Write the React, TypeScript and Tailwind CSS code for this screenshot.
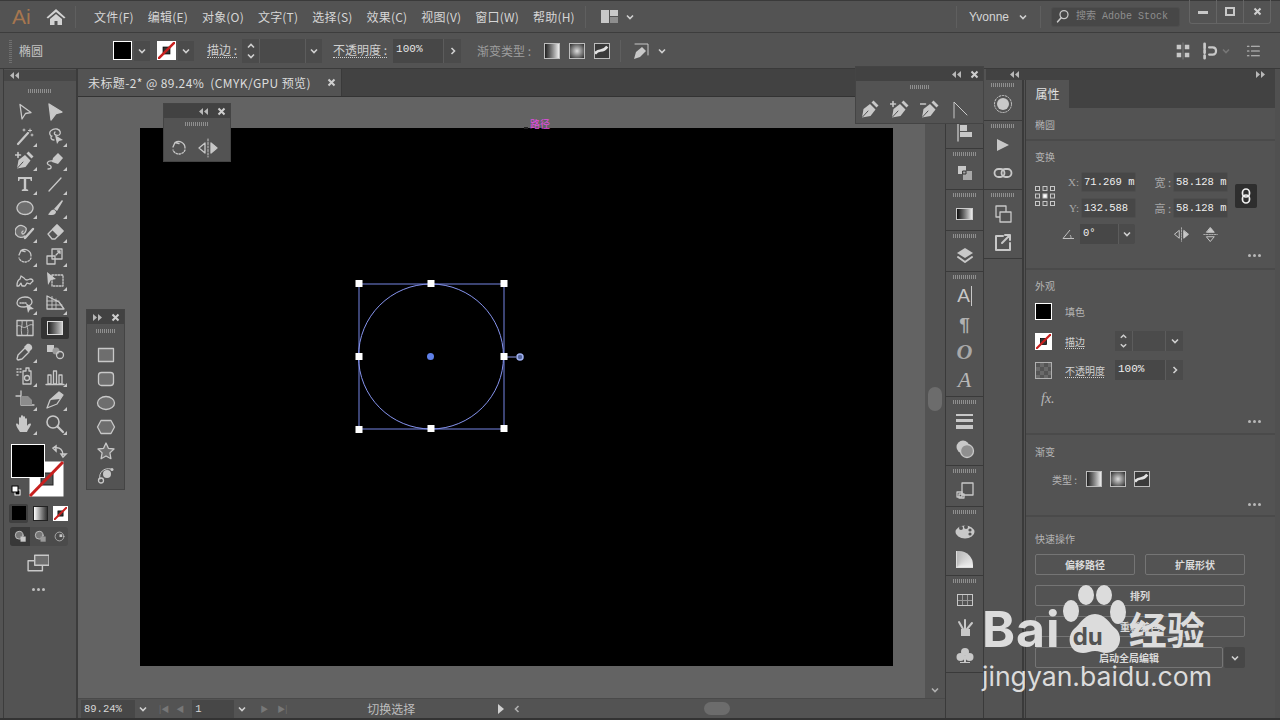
import type { ReactNode } from 'react'

const C = '#c8c8c8'

function Ic({ s = 20, children }: { s?: number; children: ReactNode }) {
  return (
    <svg width={s} height={s} viewBox="0 0 20 20" fill="none" stroke={C} strokeWidth="1.3" strokeLinejoin="round" strokeLinecap="round">
      {children}
    </svg>
  )
}

function Grip({ w = 'w-[24px]' }: { w?: string }) {
  return <div className={`${w} h-[4px] shrink-0 bg-[repeating-linear-gradient(90deg,#8f8f8f_0_1px,transparent_1px_2px)]`} />
}

function Chevron({ c = '#d0d0d0', s = 10 }: { c?: string; s?: number }) {
  return (
    <svg width={s} height={s} viewBox="0 0 10 10" fill="none" stroke={c} strokeWidth="1.6">
      <path d="M2 3.5 5 6.5 8 3.5" />
    </svg>
  )
}

function Arrows({ dir = 'left' }: { dir?: 'left' | 'right' }) {
  return (
    <svg width="9" height="7" viewBox="0 0 9 7" fill="#b8b8b8">
      {dir === 'left' ? <path d="M4 0v7L0 3.5zM9 0v7L5 3.5z" /> : <path d="M0 0v7l4-3.5zM5 0v7l4-3.5z" />}
    </svg>
  )
}

function Close() {
  return (
    <svg width="9" height="9" viewBox="0 0 9 9" stroke="#cfcfcf" strokeWidth="2">
      <path d="M1.5 1.5l6 6M7.5 1.5l-6 6" />
    </svg>
  )
}

function Pen({ extra }: { extra?: ReactNode }) {
  return (
    <Ic>
      <path d="M2 18.500 3.500 10 10 5 15.500 10.500 10.500 17Z" fill={C} stroke="none" />
      <path d="M11.500 3.500 13.500 1.500 18.500 6.500 16.500 8.500Z" fill={C} stroke="none" />
      <path d="M2.500 18 8 12" stroke="#535353" strokeWidth="1" />
      {extra}
    </Ic>
  )
}

const NoneSwatch = ({ size }: { size: string }) => (
  <div className={`${size} relative border border-white bg-white overflow-hidden`}>
    <svg className="absolute inset-0 w-full h-full" viewBox="0 0 20 20">
      <rect x="6" y="6" width="8" height="8" fill="#333" stroke="#000" />
      <path d="M0 20 20 0" stroke="#c8201f" strokeWidth="3" />
    </svg>
  </div>
)

const Sw = ({ size, children }: { size: string; children?: ReactNode }) => (
  <div className={`${size} border border-white bg-black`}>{children}</div>
)

const LinearG = 'w-[16px] h-[16px] border border-[#bdbdbd] bg-linear-to-r from-[#222222] to-[#eeeeee]'
const RadialG = 'w-[16px] h-[16px] border border-[#bdbdbd] bg-[radial-gradient(circle,#dddddd,#2a2a2a)]'

function FreeG() {
  return (
    <div className="w-[16px] h-[16px] border border-[#bdbdbd] bg-[#3a3a3a] overflow-hidden">
      <svg viewBox="0 0 16 16" width="14" height="14">
        <path d="M0 11C5 4 8 11 14 3" stroke="#e2e2e2" strokeWidth="3" fill="none" />
      </svg>
    </div>
  )
}

const tools: ReactNode[] = [
  <Ic><path d="M5 2.500 16 10.500 10.500 11.500 7 17Z" /></Ic>,
  <Ic><path d="M4 2 17 10 11 11.500 6 18Z" fill={C} /></Ic>,
  <Ic><path d="M3 18 13 7" strokeWidth="2.200" /><path d="M15 3v3M13.500 4.500h3M17 8v2M16 9h2M9 3v2M8 4h2" strokeWidth="1" /></Ic>,
  <Ic><path d="M6 10C2 6 8 2 12 3c4 1 4 5 2 6-3 1-6-1-4-3M9 14c-3 0-4-3-2-4" /><path d="M10 9l8 5-4 1-2 3Z" fill={C} stroke="none" /></Ic>,
  <Pen extra={<path d="M0.500 5h5M3 2.500v5" strokeWidth="1.600" />} />,
  <Ic><path d="M8 8 13 3 18 8 13 14 7 12Z" fill={C} stroke="none" /><path d="M8 11C2 10 1 14 4 15s3 4-1 4" /></Ic>,
  <svg width="20" height="20" viewBox="0 0 20 20" fill={C}><path d="M3 3h14v4h-1.200l-.6-2H11.200v10l2 .8V17H6.800v-1.200l2-.8V5H4.800l-.6 2H3Z" /></svg>,
  <Ic><path d="M4 17 16 4" /></Ic>,
  <Ic><ellipse cx="10" cy="10" rx="8" ry="6.500" fill="#6e6e6e" strokeDasharray="2 .4" /></Ic>,
  <Ic><path d="M9 11 17 2l1 1-6 10Z" fill={C} stroke="none" /><path d="M9 11.500c-3 0-4 3-6 5 3 1 8 1 8-3Z" fill={C} stroke="none" /></Ic>,
  <Ic><path d="M10 14a6 6 0 1 1 1-8c1 3-2 6-3 6s-2-2 0-3" fill="#6e6e6e" /><path d="M10 16 18 7" strokeWidth="2.400" /></Ic>,
  <Ic><path d="M3 12 12 3l6 6-8 8H7Z" /><path d="M12 3l6 6-4.500 4.500-6-6Z" fill={C} /></Ic>,
  <Ic><path d="M6 4.500A6.500 6.500 0 0 1 16 10M4 9l2-4.500 4 1" /><path d="M16 12a6.500 6.500 0 0 1-12 0" strokeDasharray="1.500 1.500" /></Ic>,
  <Ic><rect x="2" y="10" width="8" height="8" /><rect x="7" y="3" width="10" height="10" /><path d="M11 9l4-4M12.500 5H15v2.500" /></Ic>,
  <Ic><path d="M2 16c0-4 1-6 3-7l1-3 3 2c2 3 4 2 6 1 2 0 3 1 3 2l-3 3-3-1-2 3H7l-1-3-2 3Z" strokeDasharray="3 .6" /></Ic>,
  <Ic><path d="M2 2 11 9 6 10 3 15Z" fill={C} stroke="none" /><rect x="7" y="5" width="11" height="11" strokeDasharray="1.600 1.400" /></Ic>,
  <Ic><path d="M2 9c0-4 4-6 8-6s7 2 7 5-4 5-8 5-7-1-7-4Z" /><path d="M5 9h7" strokeDasharray="1.200 1.200" /><path d="M11 9 19 15l-4 .5-2 3.500Z" fill={C} stroke="none" /></Ic>,
  <Ic><path d="M2 2 14 8l5 7H2Z" /><path d="M2 7h12M2 11h15M7 2.500V15M11 5v10" strokeWidth=".9" /></Ic>,
  <Ic><rect x="2" y="2.500" width="16" height="15" /><path d="M2 8c4-2 5 3 9 1s4-3 7-2M7 2.500c1 5-2 7 0 15M12 2.500c-2 5 3 9 0 15" strokeWidth=".9" /></Ic>,
  <div className="w-[28px] h-[22px] bg-[#333333] rounded-[2px] flex items-center justify-center">
    <div className="w-[16px] h-[14px] border border-[#dddddd] bg-linear-to-r from-[#222222] to-[#cccccc]" />
  </div>,
  <Ic><path d="M3 18 2 17l1-4 7-7 4 4-7 7Z" /><path d="M9 5l3-3c3-1 6 2 5 5l-3 3Z" fill={C} stroke="none" /></Ic>,
  <Ic><rect x="2" y="3" width="7" height="7" fill={C} stroke="none" /><circle cx="11" cy="9" r="3.500" fill="#9a9a9a" stroke="none" /><circle cx="15" cy="13" r="3.500" /></Ic>,
  <Ic><path d="M2 3h1M5 3h1M2 6h1M5 6h1M2 9h1" strokeWidth="1.500" /><path d="M11 2h3v3h2v13H8V5h3Z" /><circle cx="12" cy="12" r="2.500" /></Ic>,
  <Ic><path d="M3 18V9h3v9ZM8.500 18V5h3v13ZM14 18V9h3v9Z" /><path d="M1 18.500h18" /></Ic>,
  <Ic><path d="M6 1v14h13M1 6h5" /><path d="M6 6h7l4 4v5H6Z" fill="#8c8c8c" stroke="none" /></Ic>,
  <Ic><path d="M2 18 5 10 14 2l4 3-6 9Z" /><path d="M5 10 14 2l4 3-3 4Z" fill={C} stroke="none" /></Ic>,
  <svg width="20" height="20" viewBox="0 0 20 20" fill={C}><path d="M5 18c-2-3-4-6-4-8 1-1 2 0 3 1V4c0-1 2-1 2 0V2c0-1 2-1 2 0v1c0-1 2-1 2 0v2c0-1 2-1 2 0v7c1-2 3-3 4-2 0 2-3 5-4 8Z" /></svg>,
  <Ic><circle cx="8" cy="8" r="6" strokeWidth="1.600" /><path d="M12.500 12.500 18 18" strokeWidth="2.200" /></Ic>,
]

function ToolButton({ item, corner }: { item: ReactNode; corner: boolean }) {
  return (
    <div className="relative h-[24px] flex items-center justify-center">
      {item}
      {corner && <div className="absolute right-[3px] bottom-[1px] w-0 h-0 border-l-[4px] border-l-transparent border-b-[4px] border-b-[#c8c8c8]" />}
    </div>
  )
}

function LeftToolbar() {
  const noCorner = [0, 1, 18, 19, 21]
  return (
    <aside className="w-[78px] shrink-0 flex bg-[#535353] border-r-2 border-[#3c3c3c]">
      <div className="w-[4px] h-full border-r border-[#3c3c3c]" />
      <div className="flex-1 flex flex-col">
        <div className="h-[11px] mt-[1px] bg-[#474747] flex items-center pl-[6px]">
          <Arrows />
        </div>
        <div className="h-[19px] flex items-center justify-center">
          <Grip />
        </div>
        <div className="grid grid-cols-2 w-[60px] ml-[6px]">
          {tools.map((t, i) => (
            <ToolButton key={i} item={t} corner={!noCorner.includes(i)} />
          ))}
        </div>
        <div className="mt-[8px] ml-[7px]">
          <svg width="60" height="54" viewBox="0 0 60 54">
            <rect x="18.500" y="17.500" width="34" height="35" fill="#fff" />
            <rect x="30" y="29" width="12" height="12" fill="#555" stroke="#222" />
            <path d="M19 52 52 18" stroke="#c8201f" strokeWidth="3" />
            <rect x="0.500" y="0.500" width="33" height="33" fill="#000" stroke="#fff" />
            <path d="M44 4c5-1 8 2 8 7M42 4l3-2v5ZM52 13l-2-3h5Z" stroke={C} strokeWidth="1.500" fill="none" />
            <rect x="4" y="46" width="5" height="5" fill="#000" stroke="#fff" />
            <rect x="1" y="42" width="6" height="6" fill="#fff" stroke="#000" />
          </svg>
        </div>
        <div className="mt-[6px] ml-[3px] w-[63px] flex gap-[5px] items-center justify-center h-[18px]">
          <div className="w-[19px] h-[19px] rounded-[2px] bg-[#3f3f3f] flex items-center justify-center">
            <div className="w-[14px] h-[14px] bg-black" />
          </div>
          <div className="w-[15px] h-[15px] border border-[#222222] bg-linear-to-r from-white to-[#333333]" />
          <NoneSwatch size="w-[15px] h-[15px]" />
        </div>
        <div className="mt-[5px] ml-[6px] w-[58px] h-[19px] rounded-[3px] bg-[#4b4b4b] flex">
          <div className="w-[20px] bg-[#383838] rounded-l-[3px] flex items-center justify-center">
            <Ic s={13}><circle cx="8" cy="8" r="6" fill="#777" /><rect x="10" y="10" width="8" height="8" fill={C} stroke="none" /></Ic>
          </div>
          <div className="w-[20px] flex items-center justify-center">
            <Ic s={13}><circle cx="8" cy="8" r="6" fill="#777" /><rect x="10" y="10" width="8" height="8" fill="#999" stroke="none" /></Ic>
          </div>
          <div className="w-[18px] flex items-center justify-center">
            <Ic s={11}><circle cx="10" cy="10" r="8" /><rect x="10" y="6" width="5" height="5" fill={C} stroke="none" /></Ic>
          </div>
        </div>
        <div className="mt-[6px] flex justify-center pr-[4px]">
          <Ic s={22}><rect x="1" y="8" width="13" height="9" /><rect x="7" y="3" width="13" height="9" fill="#6e6e6e" /></Ic>
        </div>
        <div className="mt-[14px] flex justify-center gap-[2px] pr-[4px]">
          <div className="w-[3px] h-[3px] rounded-full bg-[#c0c0c0]" />
          <div className="w-[3px] h-[3px] rounded-full bg-[#c0c0c0]" />
          <div className="w-[3px] h-[3px] rounded-full bg-[#c0c0c0]" />
        </div>
      </div>
    </aside>
  )
}

function MenuBar() {
  const menus = ['文件(F)', '编辑(E)', '对象(O)', '文字(T)', '选择(S)', '效果(C)', '视图(V)', '窗口(W)', '帮助(H)']
  return (
    <header className="h-[33px] shrink-0 flex items-center bg-[#535353] border-b border-[#3d3d3d] border-t border-t-[#3a3a3a]">
      <span className="ml-[12px] w-[22px] font-['Liberation_Sans',sans-serif] text-[21px] leading-none text-[#a6764f]">Ai</span>
      <div className="ml-[12px]">
        <svg width="20" height="18" viewBox="0 0 20 18" fill="#d2d2d2">
          <path d="M10 1 0.500 9.500l1.500 1L10 4l8 6.500 1.500-1ZM4 11v6h4.500v-4h3v4H16v-6l-6-5Z" />
        </svg>
      </div>
      <div className="w-px h-[22px] ml-[9px] bg-[#5f5f5f]" />
      <nav className="ml-[18px] flex gap-[14px] text-[12px] tracking-[0.2px] text-[#d6d6d6]">
        {menus.map((m) => (
          <span key={m}>{m}</span>
        ))}
      </nav>
      <div className="w-px h-[22px] ml-[10px] bg-[#5f5f5f]" />
      <div className="ml-[15px] flex items-center gap-[7px]">
        <div className="grid grid-cols-[8px_8px] grid-rows-[6px_6px] gap-px">
          <div className="row-span-2 bg-[#c8c8c8]" />
          <div className="bg-[#c8c8c8]" />
          <div className="bg-[#8e8e8e]" />
        </div>
        <Chevron />
      </div>
      <div className="ml-auto w-px h-[22px] bg-[#5f5f5f]" />
      <span className="ml-[12px] text-[12px] font-['Liberation_Sans',sans-serif] text-[#d6d6d6]">Yvonne</span>
      <div className="ml-[9px]">
        <Chevron />
      </div>
      <div className="w-px h-[22px] ml-[12px] bg-[#5f5f5f]" />
      <div className="ml-[10px] w-[129px] h-[20px] rounded-[3px] bg-[#474747] border border-[#4e4e4e] flex items-center pl-[4px] gap-[4px]">
        <Ic s={16}><circle cx="10" cy="7" r="5" strokeWidth="1.600" /><path d="M6.500 11 2 16" strokeWidth="2" /></Ic>
        <span className="font-['Liberation_Mono','Noto_Sans_CJK_SC',monospace] text-[10px] text-[#8f8f8f] whitespace-nowrap">搜索 Adobe Stock</span>
      </div>
      <div className="ml-[9px] mr-[9px] mb-[10px] w-[82px] h-[24px] border border-t-0 border-[#656565] rounded-b-[3px] flex items-center">
        <div className="flex-1 flex justify-center border-r border-[#656565] h-full items-center"><div className="w-[10px] h-[3px] mt-[3px] bg-[#c8c8c8]" /></div>
        <div className="flex-1 flex justify-center border-r border-[#656565] h-full items-center"><div className="w-[10px] h-[9px] border-2 border-[#c8c8c8]" /></div>
        <div className="flex-1 flex justify-center h-full items-center"><Close /></div>
      </div>
    </header>
  )
}

function ControlBar() {
  return (
    <div className="h-[36px] shrink-0 flex items-center bg-[#535353] border-b border-[#3a3a3a] text-[12px] text-[#d0d0d0]">
      <div className="ml-[9px] w-[3px] h-[24px] bg-[repeating-linear-gradient(0deg,#707070_0_1px,transparent_1px_2px)]" />
      <span className="ml-[7px] text-[#c4c4c4]">椭圆</span>
      <div className="ml-[70px]"><Sw size="w-[19px] h-[19px]" /></div>
      <div className="ml-[2px] w-[16px] h-[20px] bg-[#4b4b4b] flex items-center justify-center"><Chevron /></div>
      <div className="ml-[7px]"><NoneSwatch size="w-[19px] h-[19px]" /></div>
      <div className="ml-[2px] w-[16px] h-[20px] bg-[#4b4b4b] flex items-center justify-center"><Chevron /></div>
      <span className="ml-[13px] border-b border-dotted border-[#d0d0d0] leading-[14px]">描边 :</span>
      <div className="ml-[5px] w-[80px] h-[24px] flex items-stretch bg-[#4b4b4b]">
        <div className="w-[18px] flex flex-col items-center justify-center border-r border-[#5c5c5c]">
          <div className="rotate-180"><Chevron /></div>
          <Chevron />
        </div>
        <div className="flex-1 bg-[#4a4a4a]" />
        <div className="w-[17px] flex items-center justify-center border-l border-[#5c5c5c]"><Chevron /></div>
      </div>
      <span className="ml-[11px] border-b border-dotted border-[#d0d0d0] leading-[14px] whitespace-nowrap">不透明度 :</span>
      <div className="ml-[6px] w-[68px] h-[24px] flex items-stretch bg-[#4b4b4b]">
        <span className="flex-1 bg-[#474747] pl-[3px] font-['Liberation_Mono',monospace] text-[11px] text-[#e6e6e6] leading-[20px]">100%</span>
        <div className="w-[18px] flex items-center justify-center border-l border-[#5c5c5c]"><div className="-rotate-90"><Chevron /></div></div>
      </div>
      <span className="ml-[16px] text-[#9e9e9e] whitespace-nowrap">渐变类型 :</span>
      <div className="ml-[13px] flex gap-[9px]">
        <div className={LinearG} />
        <div className={RadialG} />
        <FreeG />
      </div>
      <div className="w-px h-[22px] ml-[10px] bg-[#5f5f5f]" />
      <div className="ml-[10px]">
        <Ic><path d="M3 18 5 11 11 6 15 10 9 16Z" fill={C} stroke="none" /><path d="M4 3h13v11" strokeWidth="1" /></Ic>
      </div>
      <div className="ml-[6px]"><Chevron /></div>
      <div className="ml-auto flex items-center pr-[19px]">
        <Ic s={18}><path d="M3 3h5v5H3ZM12 3h5v5h-5ZM3 12h5v5H3ZM12 12h5v5h-5Z" fill={C} stroke="none" /><path d="M10 1v18" stroke="#777" /></Ic>
        <div className="ml-[9px]">
          <Ic s={18}><path d="M4 2v5M4 9v3M4 15v3" strokeWidth="3" /><path d="M9 6h4c5 0 5 8 0 8H9" strokeWidth="2.400" /></Ic>
        </div>
        <div className="ml-[2px]"><Chevron c="#777777" /></div>
        <div className="ml-[14px]">
          <Ic s={16}><path d="M3 4h2M8 4h10M3 10h2M8 10h10M3 16h2M8 16h10" /></Ic>
        </div>
      </div>
    </div>
  )
}

function Selection() {
  const handles: [number, number][] = [
    [359, 283], [431, 283], [504, 283], [359, 356], [504, 356], [359, 429], [431, 428], [504, 428],
  ]
  return (
    <svg className="absolute left-[-140px] top-[-128px]" width="893" height="666" viewBox="0 0 893 666" fill="none">
      <rect x="359" y="284" width="145" height="145" stroke="#7685e4" />
      <circle cx="431" cy="356.500" r="72.500" stroke="#8694ee" />
      <path d="M504 357h12" stroke="#8e9bec" />
      <circle cx="520" cy="357" r="3" stroke="#9fb0f0" strokeWidth="1.500" fill="#54659c" />
      <circle cx="430.500" cy="356.500" r="3.500" fill="#5f80e8" />
      {handles.map(([x, y]) => (
        <rect key={`${x}-${y}`} x={x - 3.5} y={y - 3} width="7" height="7" fill="#fff" />
      ))}
    </svg>
  )
}

function CanvasArea() {
  return (
    <div className="w-[867px] shrink-0 flex flex-col">
      <div className="h-[28px] shrink-0 flex bg-[#424242] border-b border-[#333333]">
        <div className="w-[264px] h-full bg-[#535353] flex items-center pl-[10px] text-[12px] tracking-[0.4px] text-[#dcdcdc] border-r border-[#3a3a3a]">
          <span className="whitespace-pre">未标题-2* @ 89.24%  (CMYK/GPU 预览)</span>
          <div className="ml-auto mr-[5px]"><Close /></div>
        </div>
      </div>
      <div className="flex-1 min-h-0 flex">
        <main className="flex-1 bg-[#636363] pl-[62px] pt-[31px] relative overflow-hidden">
          <div className="relative w-[753px] h-[538px] bg-black">
            <Selection />
          </div>
          <span className="absolute left-[452px] top-[20px] text-[10px] leading-[14px] text-[#e14ce0]">路径</span>
          <div className="absolute left-[446px] top-[30px] w-[4px] h-[2px] bg-[#222222]" />
        </main>
        <div className="w-[20px] shrink-0 bg-[#535353] relative flex flex-col items-center justify-end pb-[3px]">
          <div className="absolute top-[290px] left-[3px] w-[14px] h-[24px] rounded-[7px] bg-[#6c6c6c]" />
          <Chevron c="#b0b0b0" />
        </div>
      </div>
      <footer className="h-[20px] shrink-0 bg-[#535353] border-t border-[#4a4a4a] flex items-center text-[11px] text-[#d8d8d8]">
        <span className="ml-[3px] w-[54px] h-[18px] bg-[#474747] pl-[3px] font-['Liberation_Mono',monospace] text-[10.5px] leading-[18px] shrink-0">89.24%</span>
        <div className="w-[16px] flex justify-center shrink-0"><Chevron /></div>
        <div className="ml-[8px] flex gap-[7px] items-center text-[#777777] text-[8px] leading-none shrink-0">
          <span>|◀</span><span>◀</span>
        </div>
        <span className="ml-[8px] w-[42px] h-[18px] bg-[#474747] pl-[3px] font-['Liberation_Mono',monospace] text-[10.5px] leading-[18px] shrink-0">1</span>
        <div className="w-[16px] flex justify-center shrink-0"><Chevron /></div>
        <div className="ml-[10px] flex gap-[9px] items-center text-[#777777] text-[8px] leading-none shrink-0">
          <span>▶</span><span>▶|</span>
        </div>
        <span className="ml-[80px] text-[#bdbdbd] text-[12px] whitespace-nowrap shrink-0">切换选择</span>
        <div className="ml-[83px] w-0 h-0 border-y-[5px] border-y-transparent border-l-[6px] border-l-[#d0d0d0] shrink-0" />
        <div className="ml-[8px] rotate-90 shrink-0"><Chevron c="#b0b0b0" /></div>
        <div className="ml-[182px] w-[26px] h-[13px] rounded-[7px] bg-[#6c6c6c] shrink-0" />
      </footer>
    </div>
  )
}

function DockGroup({ items }: { items: ReactNode[] }) {
  return (
    <div className="flex flex-col items-center pt-[3px] pb-[2px] border-b border-[#3a3a3a] shrink-0">
      <Grip />
      <div className="mt-[3px] flex flex-col">
        {items.map((it, i) => (
          <div key={i} className="h-[28px] w-[24px] flex items-center justify-center">{it}</div>
        ))}
      </div>
    </div>
  )
}

function Dock() {
  const col1 = [
    [
      <Ic><circle cx="10" cy="10" r="6" fill={C} stroke="none" /></Ic>,
      <Ic><path d="M3 1v18" /><path d="M5 3h7v6H5ZM5 10h12v5H5Z" fill={C} stroke="none" /></Ic>,
    ],
    [<Ic><path d="M3 3h8v8H3Z" fill={C} stroke="none" /><path d="M8 8h9v9H8Z" fill="#a8a8a8" stroke="none" /><path d="M8 8h3v3H8Z" stroke="#333" fill="none" strokeWidth="1" /></Ic>],
    [<div className="w-[17px] h-[12px] border border-[#cccccc] bg-linear-to-r from-[#111111] to-[#eeeeee]" />],
    [<Ic><path d="M10 3l8 5-8 5-8-5Z" fill={C} stroke="none" /><path d="M3 12l7 5 7-5" strokeWidth="2" /></Ic>],
    [
      <span className="font-['Liberation_Sans',sans-serif] text-[19px] text-[#c8c8c8] border-r border-[#c8c8c8] pr-[1px] leading-[20px]">A</span>,
      <span className="font-['Liberation_Sans',sans-serif] text-[19px] font-bold text-[#b0b0b0] leading-none">¶</span>,
      <span className="font-['Liberation_Serif',serif] italic font-bold text-[22px] text-[#a8a8a8] leading-none">O</span>,
      <span className="font-['Liberation_Serif',serif] italic text-[22px] text-[#b8b8b8] leading-none">A</span>,
    ],
    [
      <div className="flex flex-col gap-[3px]"><div className="w-[17px] h-[2px] bg-[#c8c8c8]" /><div className="w-[17px] h-[3px] bg-[#c8c8c8]" /><div className="w-[17px] h-[4px] bg-[#c8c8c8]" /></div>,
      <Ic><circle cx="8" cy="8" r="6.500" fill={C} stroke="none" /><circle cx="12" cy="12" r="6.500" fill="#8f8f8f" /></Ic>,
    ],
    [<Ic><rect x="7" y="3" width="11" height="12" /><rect x="2" y="12" width="5" height="5" /><rect x="4" y="14" width="5" height="4" /></Ic>],
    [
      <svg width="20" height="16" viewBox="0 0 20 16"><ellipse cx="10" cy="9" rx="9.500" ry="6.500" fill={C} /><circle cx="6" cy="5" r="2" fill="#535353" /><circle cx="11" cy="4" r="2" fill="#535353" /><circle cx="15" cy="7" r="1.600" fill="#535353" /><circle cx="15" cy="11" r="1.600" fill="#535353" /></svg>,
      <div className="w-[17px] h-[17px] bg-[conic-gradient(from_90deg_at_0%_100%,#111111,#eeeeee)] rounded-tr-[14px] border-l border-b border-[#dddddd]" />,
    ],
    [
      <div className="grid grid-cols-3 gap-px w-[16px] h-[12px] border border-[#c8c8c8] bg-[#999999]"><div className="bg-[#535353]" /><div className="bg-[#535353]" /><div className="bg-[#535353]" /><div className="bg-[#535353]" /><div className="bg-[#535353]" /><div className="bg-[#535353]" /></div>,
      <Ic><path d="M6 11h9v7H6Z" fill={C} stroke="none" /><path d="M8 11 4 4M10 11V2M12 11l5-6" strokeWidth="2" /></Ic>,
      <svg width="18" height="18" viewBox="0 0 18 18" fill={C}><circle cx="9" cy="5" r="4" /><circle cx="4.500" cy="10" r="4" /><circle cx="13.500" cy="10" r="4" /><path d="M8 9h2v6h4v1H4v-1h4Z" /></svg>,
    ],
  ]
  const col2 = [
    [<Ic><circle cx="10" cy="10" r="6" fill={C} stroke="none" /><circle cx="10" cy="10" r="8.500" strokeDasharray="1.500 1.500" strokeWidth="1" /></Ic>],
    [
      <svg width="14" height="14" viewBox="0 0 14 14" fill={C}><path d="M1 1l12 6-12 6Z" /></svg>,
      <Ic><rect x="1.500" y="6" width="10" height="8" rx="4" strokeWidth="1.800" /><rect x="8.500" y="6" width="10" height="8" rx="4" strokeWidth="1.800" /></Ic>,
    ],
    [
      <Ic><rect x="3" y="2" width="10" height="11" /><rect x="7" y="8" width="11" height="10" fill="#535353" /></Ic>,
      <Ic><path d="M10 4H3v14h14v-7" strokeWidth="2" /><path d="M9 11l8-8M12 3h5v5" strokeWidth="2" /></Ic>,
    ],
  ]
  return (
    <div className="w-[80px] shrink-0 flex bg-[#535353]">
      <div className="w-[39px] flex flex-col border-l border-r border-[#3a3a3a] h-full pt-[11px]">
        {col1.map((g, i) => <DockGroup key={i} items={g} />)}
      </div>
      <div className="w-[40px] flex flex-col border-r-2 border-[#3a3a3a] h-full pt-[11px]">
        {col2.map((g, i) => <DockGroup key={i} items={g} />)}
      </div>
    </div>
  )
}

const Mono = "font-['Liberation_Mono',monospace] text-[10.5px] text-[#efefef] whitespace-nowrap overflow-hidden"

function Field({ label, value, wide }: { label: string; value: string; wide?: boolean }) {
  return (
    <div className="flex items-center h-[20px]">
      <span className={`${wide ? 'w-[29px]' : "w-[21px] font-['Liberation_Serif',serif]"} text-[11px] text-[#a8a8a8] text-right pr-[2px] whitespace-nowrap`}>{label}</span>
      <div className={`${Mono} w-[55px] h-[20px] leading-[18px] bg-[#474747] rounded-[2px] border border-[#4e4e4e] pl-[2px]`}>{value}</div>
    </div>
  )
}

function Dots() {
  return (
    <div className="flex justify-end gap-[2px] -mr-[4px]">
      <div className="w-[3px] h-[3px] rounded-full bg-[#b8b8b8]" />
      <div className="w-[3px] h-[3px] rounded-full bg-[#b8b8b8]" />
      <div className="w-[3px] h-[3px] rounded-full bg-[#b8b8b8]" />
    </div>
  )
}

function Section({ title, className, children }: { title: string; className: string; children?: ReactNode }) {
  return (
    <section className={`${className} shrink-0 border-b-2 border-[#4a4a4a] pl-[9px] pr-[18px]`}>
      <div className="h-[18px] leading-[18px] mt-[7px] text-[10px] text-[#b4b4b4]">{title}</div>
      {children}
    </section>
  )
}

function QuickButton({ label, className = '' }: { label: string; className?: string }) {
  return (
    <div className={`${className} h-[21px] border border-[#757575] rounded-[2px] flex items-center justify-center text-[10px] font-bold text-[#dadada]`}>{label}</div>
  )
}

function Properties() {
  return (
    <div className="w-[255px] shrink-0 flex flex-col bg-[#535353] border-r-[5px] border-r-[#505050] border-l border-l-[#3a3a3a]">
      <div className="h-[11px] shrink-0 -ml-[40px] relative bg-[#424242] flex items-center justify-between pl-[24px] pr-[10px]">
        <Arrows />
        <Arrows dir="right" />
      </div>
      <div className="h-[28px] shrink-0 bg-[#424242] flex">
        <div className="w-[43px] bg-[#535353] flex items-center justify-center text-[12px] text-[#e2e2e2]">属性</div>
      </div>
      <section className="h-[33px] shrink-0 border-b-2 border-[#4a4a4a] pl-[9px] text-[10px] text-[#b4b4b4] leading-[33px]">椭圆</section>

      <Section title="变换" className="h-[129px]">
        <div className="flex mt-[6px]">
          <div className="w-[21px] mt-[14px]">
            <svg width="20" height="20" viewBox="0 0 20 20" fill="none" stroke="#c8c8c8">
              {[0.5, 8, 15.5].map((x) => [0.5, 8, 15.5].map((y) => (
                <rect key={`${x}${y}`} x={x} y={y} width="4" height="4" fill={x === 8 && y === 8 ? '#fff' : 'none'} />
              )))}
            </svg>
          </div>
          <div className="ml-[5px] flex flex-col gap-[6px]">
            <Field label="X:" value="71.269 m" />
            <Field label="Y:" value="132.588" />
            <div className="flex items-center h-[20px]">
              <span className="w-[20px] pl-[2px] text-[11px] text-[#c0c0c0]">
                <svg width="14" height="12" viewBox="0 0 14 12" fill="none" stroke="#c0c0c0"><path d="M1 10.500h11M1 10.500 8 2M8 7c1 1 1 2 1 3.500" /></svg>
              </span>
              <div className="w-[55px] h-[20px] flex bg-[#4b4b4b] rounded-[2px]">
                <span className={`${Mono} flex-1 bg-[#474747] leading-[18px] pl-[3px]`}>0°</span>
                <div className="w-[17px] flex items-center justify-center border-l border-[#5c5c5c]"><Chevron /></div>
              </div>
            </div>
          </div>
          <div className="ml-[8px] flex flex-col gap-[6px]">
            <Field wide label="宽 :" value="58.128 m" />
            <Field wide label="高 :" value="58.128 m" />
            <div className="flex items-center h-[20px] pl-[30px] gap-[14px]">
              <Ic s={15}><path d="M10 1v18" strokeDasharray="2 1.500" strokeWidth="1" /><path d="M7 5v10L1 10Z" /><path d="M13 5v10l6-5Z" fill={C} /></Ic>
              <Ic s={15}><path d="M1 10h18" strokeDasharray="2 1.500" strokeWidth="1" /><path d="M5 7h10L10 1Z" fill={C} /><path d="M5 13h10l-5 6Z" /></Ic>
            </div>
          </div>
          <div className="ml-[7px] mt-[12px] w-[23px] h-[24px] rounded-[2px] bg-[#2e2e2e] flex items-center justify-center">
            <svg width="10" height="16" viewBox="0 0 10 16" fill="none" stroke="#f0f0f0" strokeWidth="1.700">
              <rect x="1.500" y="1" width="7" height="8" rx="3.500" />
              <rect x="1.500" y="7" width="7" height="8" rx="3.500" />
            </svg>
          </div>
        </div>
        <div className="mt-[10px]"><Dots /></div>
      </Section>

      <Section title="外观" className="h-[165px]">
        <div className="mt-[7px] flex flex-col gap-[10px]">
          <div className="h-[19px] flex items-center">
            <Sw size="w-[17px] h-[17px]" />
            <span className="ml-[13px] text-[10px] text-[#b4b4b4]">填色</span>
          </div>
          <div className="h-[20px] flex items-center">
            <NoneSwatch size="w-[17px] h-[17px]" />
            <span className="ml-[13px] w-[50px] text-[10px] text-[#d0d0d0] underline decoration-dotted underline-offset-2">描边</span>
            <div className="w-[68px] h-[20px] bg-[#4b4b4b] flex">
              <div className="w-[18px] flex flex-col items-center justify-center border-r border-[#5c5c5c]">
                <div className="rotate-180"><Chevron s={9} /></div>
                <Chevron s={9} />
              </div>
              <div className="flex-1" />
              <div className="w-[18px] flex items-center justify-center border-l border-[#5c5c5c]"><Chevron /></div>
            </div>
          </div>
          <div className="h-[20px] flex items-center -mt-[1px]">
            <div className="w-[17px] h-[17px] border border-[#b0b0b0] bg-[repeating-conic-gradient(#6a6a6a_0_25%,#555555_0_50%)] bg-[length:8px_8px]" />
            <span className="ml-[13px] w-[50px] text-[10px] text-[#d0d0d0] underline decoration-dotted underline-offset-2 whitespace-nowrap">不透明度</span>
            <div className="w-[68px] h-[20px] bg-[#4b4b4b] flex">
              <span className="flex-1 bg-[#474747] pl-[3px] font-['Liberation_Mono',monospace] text-[11px] text-[#efefef] leading-[18px]">100%</span>
              <div className="w-[18px] flex items-center justify-center border-l border-[#5c5c5c]"><div className="-rotate-90"><Chevron /></div></div>
            </div>
          </div>
        </div>
        <div className="mt-[11px] pl-[6px] font-['Liberation_Serif',serif] italic text-[14px] leading-[16px] text-[#b8b8b8]">fx.</div>
        <div className="mt-[13px]"><Dots /></div>
      </Section>

      <Section title="渐变" className="h-[82px] pt-px">
        <div className="mt-[6px] flex items-center h-[24px] pl-[17px]">
          <span className="w-[34px] text-[10px] text-[#b4b4b4] whitespace-nowrap">类型 :</span>
          <div className="flex gap-[8px]">
            <div className={LinearG} />
            <div className={RadialG} />
            <FreeG />
          </div>
        </div>
        <div className="mt-[12px]"><Dots /></div>
      </Section>

      <section className="flex-1 pl-[9px] pr-[30px] relative">
        <div className="mt-[13px] h-[18px] leading-[18px] text-[10px] text-[#b4b4b4]">快速操作</div>
        <div className="mt-[6px] flex flex-col gap-[10px]">
          <div className="flex gap-[10px]">
            <QuickButton label="偏移路径" className="flex-1" />
            <QuickButton label="扩展形状" className="flex-1" />
          </div>
          <QuickButton label="排列" />
          <QuickButton label="重新着色" />
          <div className="flex gap-px">
            <QuickButton label="启动全局编辑" className="flex-1" />
            <div className="w-[21px] h-[21px] rounded-[2px] bg-[#474747] flex items-center justify-center"><Chevron /></div>
          </div>
        </div>
      </section>
    </div>
  )
}

function PanelHead({ h = 'h-[14px]', right }: { h?: string; right?: ReactNode }) {
  return <div className={`${h} shrink-0 bg-[#424242] flex items-center justify-end gap-[9px] pr-[4px]`}>{right}</div>
}

function RotatePanel() {
  return (
    <div className="absolute left-[163px] top-[103px] w-[68px] h-[59px] bg-[#535353] border border-[#444444]">
      <PanelHead right={<><Arrows /><Close /></>} />
      <div className="flex justify-center mt-[4px]"><Grip /></div>
      <div className="flex gap-[9px] pl-[5px] mt-[12px]">
        <Ic><path d="M6 4.500A6.500 6.500 0 0 1 16 10M4 9l2-4.500 4 1" /><path d="M16 12a6.500 6.500 0 0 1-12 0" strokeDasharray="1.500 1.500" /></Ic>
        <Ic><path d="M10 1v18" strokeDasharray="2 1.500" strokeWidth="1" /><path d="M7 5v10L1 10Z" /><path d="M13 5v10l6-5Z" fill={C} /></Ic>
      </div>
    </div>
  )
}

function ShapePanel() {
  return (
    <div className="absolute left-[86px] top-[309px] w-[39px] h-[181px] bg-[#535353] border border-[#444444] flex flex-col">
      <PanelHead right={<><Arrows dir="right" /><Close /></>} />
      <div className="flex justify-center mt-[5px]"><Grip w="w-[20px]" /></div>
      <div className="mt-[12px] flex flex-col items-center gap-[4px]">
        <Ic><rect x="2.500" y="3.500" width="15" height="13" fill="#6e6e6e" /></Ic>
        <Ic><rect x="2.500" y="3.500" width="15" height="13" rx="3" fill="#6e6e6e" /></Ic>
        <Ic><ellipse cx="10" cy="10" rx="8.500" ry="6.500" fill="#6e6e6e" /></Ic>
        <Ic><path d="M5 3.500h10L18.500 10 15 16.500H5L1.500 10Z" fill="#6e6e6e" /></Ic>
        <Ic><path d="M10 2l2.400 5.300 5.600.7-4.100 3.900 1 5.800L10 15l-4.900 2.700 1-5.800L2 8l5.600-.7Z" fill="#6e6e6e" /></Ic>
        <Ic><circle cx="11" cy="9" r="4" fill={C} stroke="none" /><path d="M4 14C2 8 8 2 15 4" strokeWidth="1" /><circle cx="5" cy="15.500" r="2.500" /><circle cx="16" cy="4.500" r="1.500" fill={C} stroke="none" /></Ic>
      </div>
    </div>
  )
}

function PenPanel() {
  return (
    <div className="absolute left-[855px] top-[66px] w-[129px] h-[58px] bg-[#535353] border border-[#444444] flex flex-col">
      <PanelHead right={<><Arrows /><Close /></>} />
      <div className="flex justify-center mt-[4px]"><Grip w="w-[20px]" /></div>
      <div className="mt-[10px] pl-[4px] flex gap-[10px]">
        <Pen />
        <Pen extra={<path d="M0.500 5h5M3 2.500v5" strokeWidth="1.600" />} />
        <Pen extra={<path d="M0.500 5h5" strokeWidth="1.600" />} />
        <Ic><path d="M4 19V3L17 16" strokeWidth="1" /></Ic>
      </div>
    </div>
  )
}

function Watermark() {
  return (
    <div className="absolute left-[982px] top-[580px] w-[230px] text-[#dcdcdc] pointer-events-none">
      <div className="flex items-end h-[77px]">
        <span className="font-['Inter',sans-serif] font-bold text-[50px] leading-[56px] tracking-[1px]">Bai</span>
        <div className="relative w-[68px] h-[72px] shrink-0">
          <svg className="absolute inset-0" width="68" height="72" viewBox="0 0 68 72" fill="#dcdcdc">
            <ellipse cx="10" cy="26" rx="8" ry="11" />
            <ellipse cx="25" cy="10" rx="8" ry="10" />
            <ellipse cx="43" cy="10" rx="8" ry="10" />
            <ellipse cx="57" cy="27" rx="8" ry="12" />
            <path d="M34 29c10 0 14 9 21 15 8 8 4 24-10 24-4 0-7-2-11-2s-8 2-12 2C8 68 5 52 13 44c7-6 11-15 21-15Z" />
          </svg>
          <span className="absolute left-[12px] top-[38px] font-['Inter',sans-serif] font-bold text-[24px] leading-[28px] text-[#535353]">du</span>
        </div>
        <span className="font-['Noto_Sans_CJK_SC',sans-serif] font-bold text-[38px] leading-[46px] mb-[6px] whitespace-nowrap">经验</span>
      </div>
      <div className="font-['Inter',sans-serif] text-[26.6px] leading-[34px] mt-[2px] whitespace-nowrap">jingyan.baidu.com</div>
    </div>
  )
}

export default function App() {
  return (
    <div className="relative w-[1280px] h-[720px] overflow-hidden bg-[#333333] font-['Noto_Sans_CJK_SC','Liberation_Sans',sans-serif] flex flex-col">
      <MenuBar />
      <ControlBar />
      <div className="h-[649px] shrink-0 flex">
        <LeftToolbar />
        <CanvasArea />
        <Dock />
        <Properties />
      </div>
      <RotatePanel />
      <ShapePanel />
      <PenPanel />
      <Watermark />
    </div>
  )
}
